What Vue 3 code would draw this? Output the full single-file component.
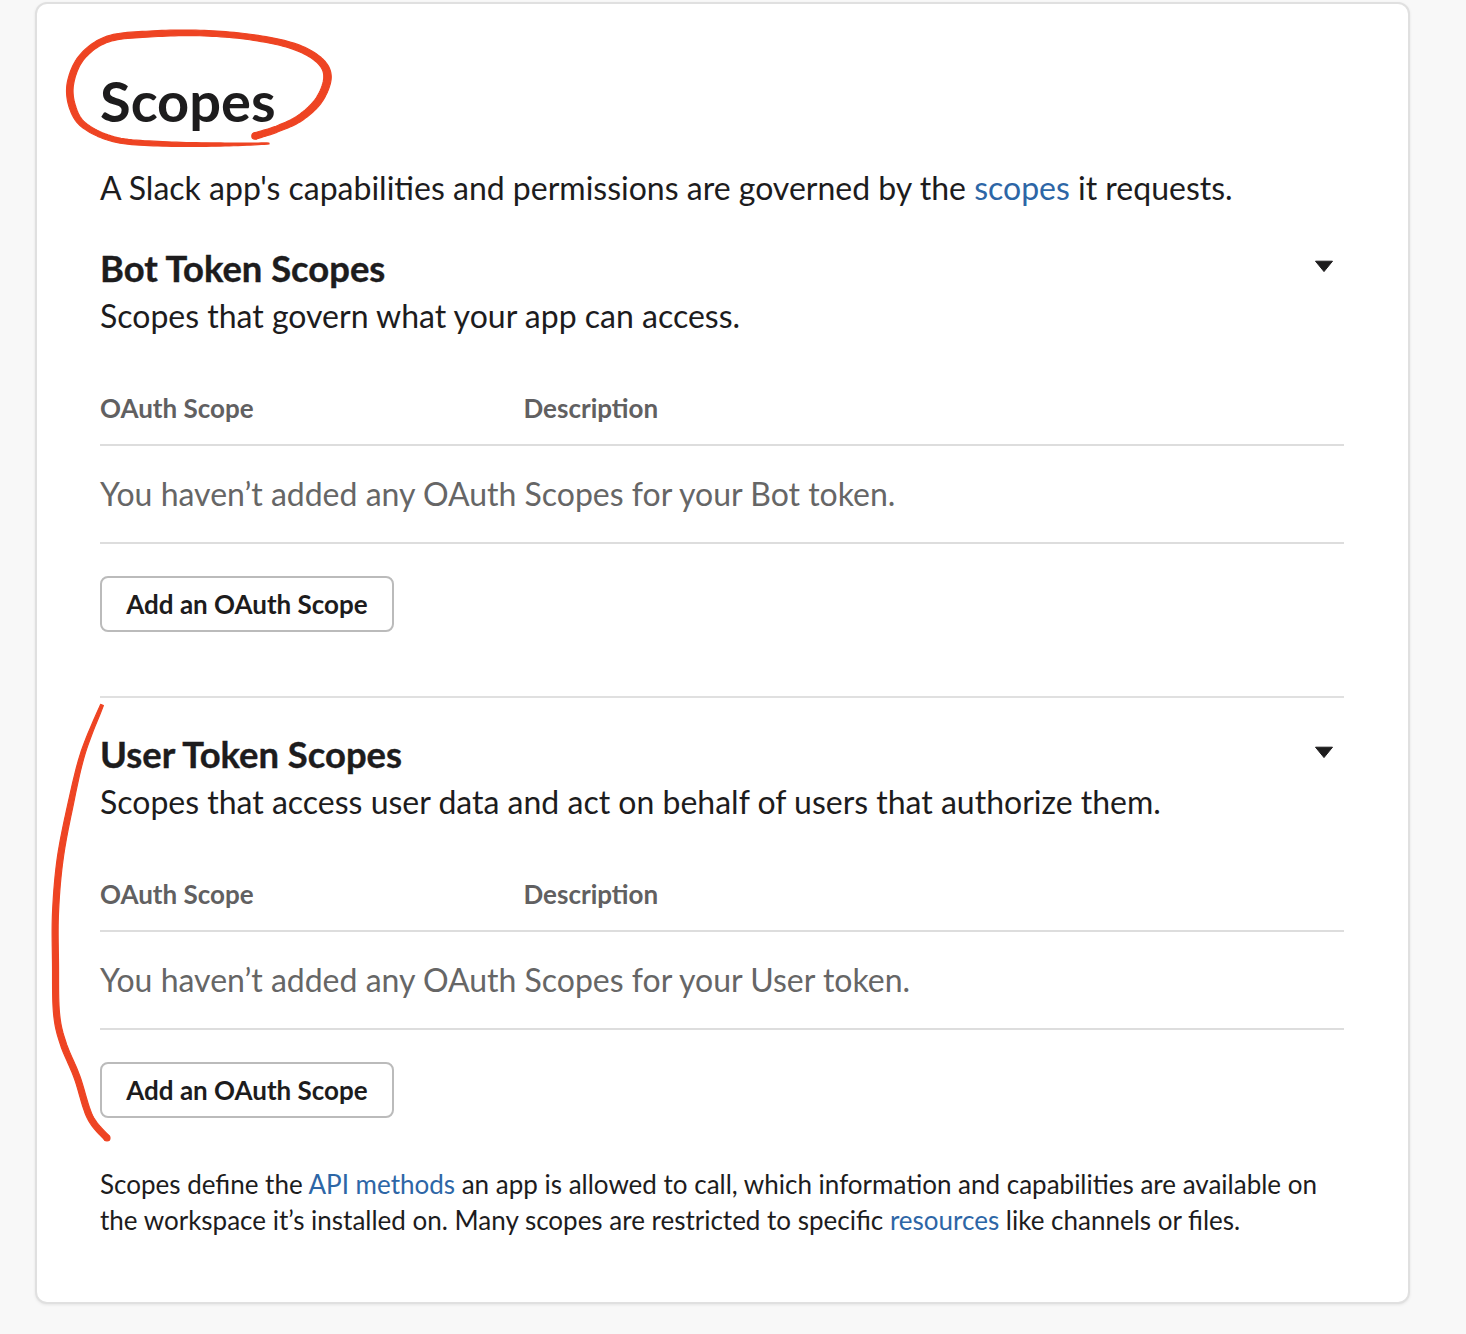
<script setup>
const sections = [
  { title: 'Bot Token Scopes', sub: 'Scopes that govern what your app can access.', empty: 'You haven’t added any OAuth Scopes for your Bot token.' },
  { title: 'User Token Scopes', sub: 'Scopes that access user data and act on behalf of users that authorize them.', empty: 'You haven’t added any OAuth Scopes for your User token.' }
]

// Pen stroke of varying width: each point is [x, y, width]
function ribbon(pts) {
  const samples = []
  const cr = (a, b, c, d, t) =>
    0.5 * (2 * b + (c - a) * t + (2 * a - 5 * b + 4 * c - d) * t * t + (3 * b - a - 3 * c + d) * t * t * t)
  for (let i = 0; i < pts.length - 1; i++) {
    const p0 = pts[i - 1] || pts[i]
    const p1 = pts[i]
    const p2 = pts[i + 1]
    const p3 = pts[i + 2] || p2
    for (let s = 0; s < 12; s++) {
      const t = s / 12
      samples.push([
        cr(p0[0], p1[0], p2[0], p3[0], t),
        cr(p0[1], p1[1], p2[1], p3[1], t),
        p1[2] + (p2[2] - p1[2]) * t
      ])
    }
  }
  samples.push(pts[pts.length - 1])
  const left = []
  const right = []
  samples.forEach((p, i) => {
    const a = samples[Math.max(i - 1, 0)]
    const b = samples[Math.min(i + 1, samples.length - 1)]
    const dx = b[0] - a[0]
    const dy = b[1] - a[1]
    const len = Math.hypot(dx, dy) || 1
    const h = p[2] / 2
    left.push(`${(p[0] - (dy / len) * h).toFixed(2)} ${(p[1] + (dx / len) * h).toFixed(2)}`)
    right.unshift(`${(p[0] + (dy / len) * h).toFixed(2)} ${(p[1] - (dx / len) * h).toFixed(2)}`)
  })
  return `M${left.join('L')}L${right.join('L')}Z`
}

const ring = ribbon([
  [269, 143.5, 1], [225, 144.5, 3], [167, 144, 4.5], [117, 140, 5], [85, 126, 5.5], [72.5, 107, 6.5],
  [70.5, 83, 6.5], [82, 57, 6], [108, 39, 6], [150, 34, 6], [200, 33, 5.5], [250, 37, 5.5],
  [293, 46, 6], [319, 60, 6.5], [327.5, 77, 7.5], [319, 100, 7], [300, 118, 6.5], [277, 129, 6], [255, 136, 6.5]
])
const stroke = ribbon([
  [102, 705, 3], [83, 753, 4.5], [70, 807, 5.5], [60, 860, 6], [55.5, 913, 6], [55.5, 963, 6],
  [56.5, 1013, 6], [63, 1043, 6], [77, 1077, 6], [90, 1117, 6], [107, 1138, 6]
])
</script>

<template>
  <div class="page">
    <main class="card">
      <h1 class="title">Scopes</h1>
      <p class="intro">A Slack app's capabilities and permissions are governed by the <a class="link">scopes</a> it requests.</p>

      <section v-for="(s, i) in sections" :key="s.title" class="section" :class="{ second: i === 1 }">
        <div class="head">
          <div>
            <h2 class="h2">{{ s.title }}</h2>
            <p class="sub">{{ s.sub }}</p>
          </div>
          <svg class="caret" width="20" height="14" viewBox="0 0 20 14"><path d="M1.5 2.2h17L10 12.6z" fill="#1d1c1d" stroke="#1d1c1d" stroke-width="1" stroke-linejoin="round"/></svg>
        </div>
        <div class="thead">
          <span class="col">OAuth Scope</span>
          <span>Description</span>
        </div>
        <div class="empty">{{ s.empty }}</div>
        <button class="btn">Add an OAuth Scope</button>
      </section>

      <p class="foot">Scopes define the <a class="link">API methods</a> an app is allowed to call, which information and capabilities are available on<br>the workspace it’s installed on. Many scopes are restricted to specific <a class="link">resources</a> like channels or files.</p>
    </main>

    <svg class="ink" width="1466" height="1334" viewBox="0 0 1466 1334" fill="#ee4423" stroke="#ee4423" stroke-width="1.2" stroke-linecap="round" stroke-linejoin="round">
      <path :d="ring"/>
      <path :d="stroke"/>
      <circle cx="255" cy="136" r="3.2"/>
      <circle cx="107" cy="1138" r="3"/>
    </svg>
  </div>
</template>

<style>
html, body { margin: 0; background: #f8f8f8; }
</style>

<style scoped>
.page {
  position: relative;
  width: 1466px;
  height: 1334px;
  overflow: hidden;
  background: #f8f8f8;
  font-family: Lato, "Liberation Sans", sans-serif;
  color: #1d1c1d;
  padding: 2px 0 0 35px;
  box-sizing: border-box;
}
.card {
  box-sizing: border-box;
  width: 1375px;
  height: 1302px;
  background: #fff;
  border: 2px solid #e0e0e0;
  border-radius: 12px;
  box-shadow: 0 1px 3px rgba(0,0,0,.08);
  padding: 0 64px 0 63px;
}
.title {
  margin: 0;
  padding-top: 64px;
  font-size: 56px;
  line-height: 66px;
  font-weight: 700;
}
.intro {
  margin: 0;
  padding-top: 32px;
  font-size: 32px;
  line-height: 44px;
}
.link { color: #2d66a6; }
.section { padding-top: 34px; }
.section.second {
  margin-top: 64px;
  padding-top: 32px;
  border-top: 2px solid #e0e0e0;
}
.head { display: flex; justify-content: space-between; align-items: flex-start; }
.h2 {
  margin: 0;
  font-size: 36.4px;
  line-height: 48px;
  font-weight: 700;
  -webkit-text-stroke: 0.4px #1d1c1d;
}
.sub {
  margin: 0;
  font-size: 32px;
  line-height: 47px;
}
.caret { margin: 15px 10px 0 0; }
.thead {
  display: flex;
  margin-top: 33px;
  height: 72px;
  align-items: center;
  font-size: 26px;
  font-weight: 700;
  color: #616061;
  border-bottom: 2px solid #ddd;
}
.col { width: 423.5px; }
.empty {
  height: 94px;
  padding-bottom: 2px;
  display: flex;
  align-items: center;
  font-size: 32px;
  color: #666;
  border-bottom: 2px solid #ddd;
}
.btn {
  display: block;
  margin-top: 32px;
  width: 294px;
  height: 56px;
  padding: 0;
  background: #fff;
  border: 2px solid #bbb;
  border-radius: 8px;
  font: 700 26px Lato, sans-serif;
  color: #1d1c1d;
}
.foot {
  margin: 0;
  padding-top: 48px;
  font-size: 26px;
  line-height: 36px;
}
.ink { position: absolute; left: 0; top: 0; pointer-events: none; }
</style>
